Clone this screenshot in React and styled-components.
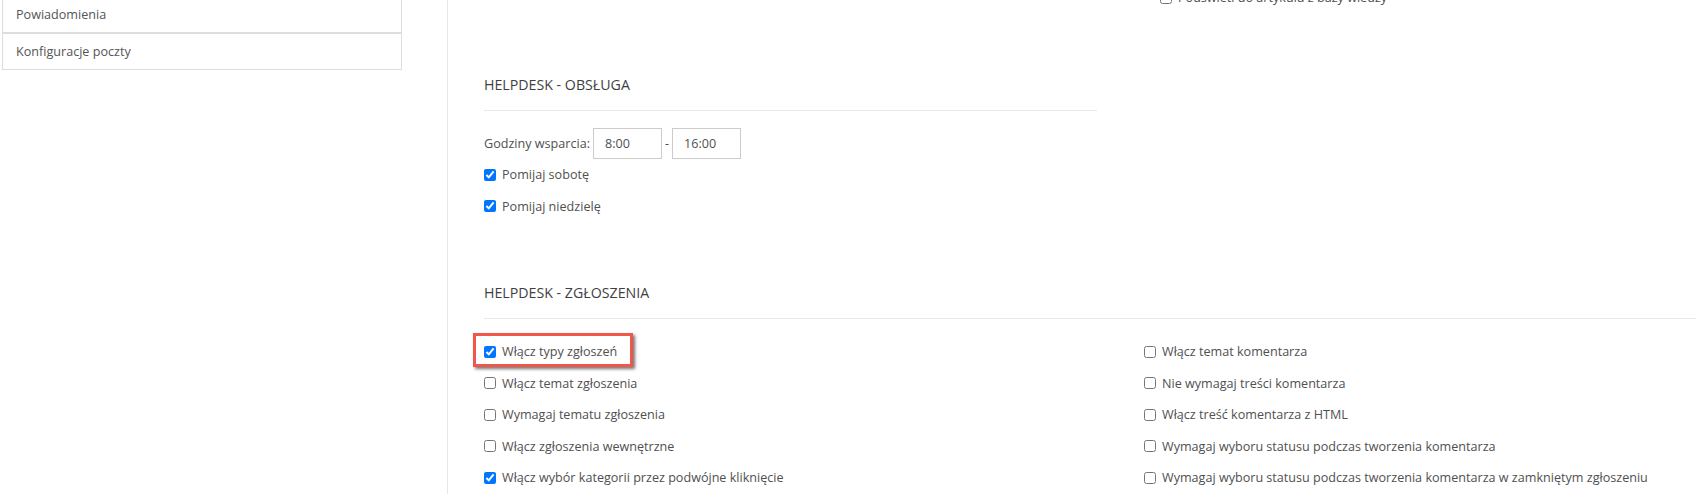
import React from 'react';
import styled, { createGlobalStyle } from 'styled-components';

const GlobalStyle = createGlobalStyle`
  html, body {
    margin: 0;
    padding: 0;
    background: #ffffff;
  }
  body {
    font-family: 'Open Sans', 'Noto Sans', sans-serif;
    font-size: 12.6px;
    color: #505050;
    overflow: hidden;
  }
`;

const StyledLayout = styled.div`
  display: flex;
  height: 494px;
  overflow: hidden;
`;

const StyledSidebar = styled.aside`
  width: 447px;
  flex-shrink: 0;
  padding-left: 2px;
  box-sizing: border-box;
`;

const StyledMenu = styled.ul`
  list-style: none;
  margin: -4px 0 0 0;
  padding: 0;
  width: 400px;
`;

const StyledMenuItem = styled.li`
  height: 35px;
  line-height: 35px;
  padding: 0 13px;
  border: 1px solid #dddddd;
  color: #555555;
  background: #ffffff;
`;

const StyledMain = styled.main`
  flex: 1;
  border-left: 1px solid #e7e7e7;
  padding-left: 36px;
`;

const StyledContent = styled.div`
  margin-top: -18px;
`;

const StyledPrevious = styled.div`
  padding-left: 676px;
`;

const StyledSection = styled.section`
  margin-top: 61px;
  width: ${({ width }) => width || 'auto'};
`;

const StyledTitle = styled.h4`
  margin: 0;
  padding-bottom: 15px;
  border-bottom: 1px solid #e8e8e8;
  font-size: 14.2px;
  line-height: 20px;
  font-weight: 400;
  text-transform: uppercase;
  color: #3f3f3f;
`;

const StyledBody = styled.div`
  padding-top: 17px;
`;

const StyledColumns = styled.div`
  display: grid;
  grid-template-columns: 660px 1fr;
`;

const StyledRow = styled.label`
  position: relative;
  display: flex;
  align-items: center;
  height: 31.5px;
  white-space: nowrap;
`;

const StyledCheckbox = styled.input`
  width: 12px;
  height: 12px;
  margin: 0 6px 0 0;
`;

const StyledLabelText = styled.span`
  margin-right: 3px;
`;

const StyledTimeInput = styled.input`
  width: 69px;
  height: 31px;
  box-sizing: border-box;
  padding: 0 11px;
  border: 1px solid #cccccc;
  border-radius: 0;
  font-family: inherit;
  font-size: 12.6px;
  color: #505050;
  outline: none;
`;

const StyledDash = styled.span`
  margin: 0 3px;
`;

const StyledHighlight = styled.span`
  position: absolute;
  top: -3px;
  left: -11px;
  width: 160px;
  height: 34px;
  box-sizing: border-box;
  border: 3px solid #f0574a;
  box-shadow: 2px 2px 3px rgba(0, 0, 0, 0.55);
  pointer-events: none;
`;

const Check = ({ checked, children, highlight }) => (
  <StyledRow>
    <StyledCheckbox type="checkbox" defaultChecked={checked} />
    {children}
    {highlight && <StyledHighlight />}
  </StyledRow>
);

const leftOptions = [
  { text: 'Włącz typy zgłoszeń', checked: true, highlight: true },
  { text: 'Włącz temat zgłoszenia' },
  { text: 'Wymagaj tematu zgłoszenia' },
  { text: 'Włącz zgłoszenia wewnętrzne' },
  { text: 'Włącz wybór kategorii przez podwójne kliknięcie', checked: true },
];

const rightOptions = [
  { text: 'Włącz temat komentarza' },
  { text: 'Nie wymagaj treści komentarza' },
  { text: 'Włącz treść komentarza z HTML' },
  { text: 'Wymagaj wyboru statusu podczas tworzenia komentarza' },
  { text: 'Wymagaj wyboru statusu podczas tworzenia komentarza w zamkniętym zgłoszeniu' },
];

const App = () => (
  <>
    <GlobalStyle />
    <StyledLayout>
      <StyledSidebar>
        <StyledMenu>
          <StyledMenuItem>Powiadomienia</StyledMenuItem>
          <StyledMenuItem>Konfiguracje poczty</StyledMenuItem>
        </StyledMenu>
      </StyledSidebar>
      <StyledMain>
        <StyledContent>
          <StyledPrevious>
            <Check>Podświetl do artykułu z bazy wiedzy</Check>
          </StyledPrevious>

          <StyledSection width="613px">
            <StyledTitle>Helpdesk - obsługa</StyledTitle>
            <StyledBody>
              <StyledRow as="div">
                <StyledLabelText>Godziny wsparcia:</StyledLabelText>
                <StyledTimeInput defaultValue="8:00" />
                <StyledDash>-</StyledDash>
                <StyledTimeInput defaultValue="16:00" />
              </StyledRow>
              <Check checked>Pomijaj sobotę</Check>
              <Check checked>Pomijaj niedzielę</Check>
            </StyledBody>
          </StyledSection>

          <StyledSection>
            <StyledTitle>Helpdesk - zgłoszenia</StyledTitle>
            <StyledBody>
              <StyledColumns>
                <div>
                  {leftOptions.map(item => (
                    <Check key={item.text} checked={item.checked} highlight={item.highlight}>
                      {item.text}
                    </Check>
                  ))}
                </div>
                <div>
                  {rightOptions.map(item => (
                    <Check key={item.text}>{item.text}</Check>
                  ))}
                </div>
              </StyledColumns>
            </StyledBody>
          </StyledSection>
        </StyledContent>
      </StyledMain>
    </StyledLayout>
  </>
);

export default App;
